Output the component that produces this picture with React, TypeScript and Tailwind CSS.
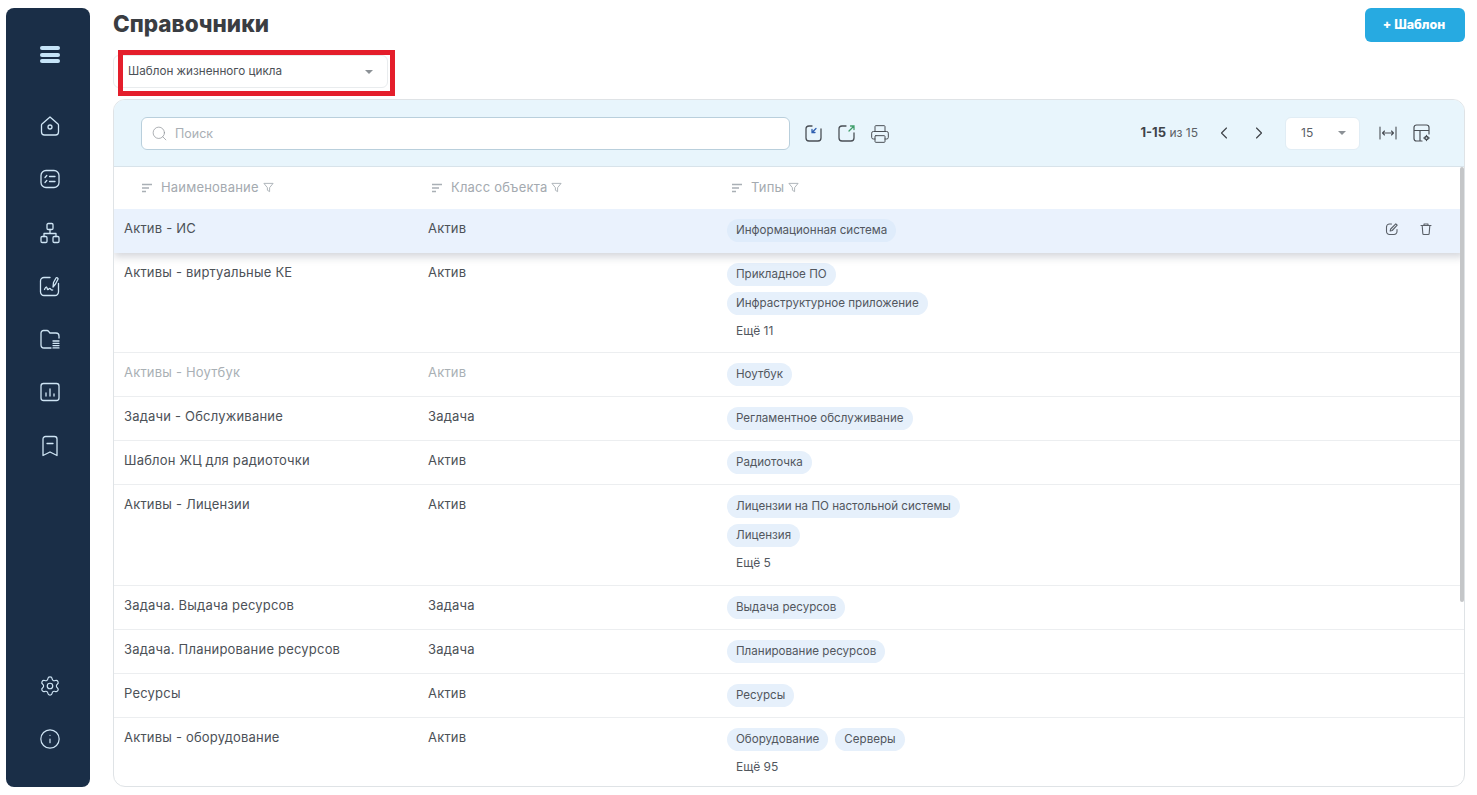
import { Settings, Info, Search, ChevronLeft, ChevronRight, Printer } from "lucide-react";

interface Row {
  name: string;
  cls: string;
  chips: string[][];
  more?: string;
  height: string;
  muted?: boolean;
  active?: boolean;
}

const rows: Row[] = [
  { name: "Актив - ИС", cls: "Актив", chips: [["Информационная система"]], height: "h-[44px]", active: true },
  {
    name: "Активы - виртуальные КЕ",
    cls: "Актив",
    chips: [["Прикладное ПО"], ["Инфраструктурное приложение"]],
    more: "Ещё 11",
    height: "h-[100px]",
  },
  { name: "Активы - Ноутбук", cls: "Актив", chips: [["Ноутбук"]], height: "h-[44px]", muted: true },
  { name: "Задачи - Обслуживание", cls: "Задача", chips: [["Регламентное обслуживание"]], height: "h-[44px]" },
  { name: "Шаблон ЖЦ для радиоточки", cls: "Актив", chips: [["Радиоточка"]], height: "h-[44px]" },
  {
    name: "Активы - Лицензии",
    cls: "Актив",
    chips: [["Лицензии на ПО настольной системы"], ["Лицензия"]],
    more: "Ещё 5",
    height: "h-[101px]",
  },
  { name: "Задача. Выдача ресурсов", cls: "Задача", chips: [["Выдача ресурсов"]], height: "h-[44px]" },
  { name: "Задача. Планирование ресурсов", cls: "Задача", chips: [["Планирование ресурсов"]], height: "h-[44px]" },
  { name: "Ресурсы", cls: "Актив", chips: [["Ресурсы"]], height: "h-[44px]" },
  { name: "Активы - оборудование", cls: "Актив", chips: [["Оборудование", "Серверы"]], more: "Ещё 95", height: "h-[72px]" },
];

// sidebar icons, drawn on a 24 grid
function NavIcon({ children }: { children: React.ReactNode }) {
  return (
    <svg width="24" height="24" viewBox="0 0 24 24" fill="none" stroke="#cfe5f5" strokeWidth="1.3" strokeLinecap="round" strokeLinejoin="round">
      {children}
    </svg>
  );
}

function SortIcon() {
  return (
    <svg width="12" height="12" viewBox="0 0 12 12" fill="none" stroke="#a9afb5" strokeWidth="1.4">
      <path d="M1 2.5h10M1 6h7M1 9.5h4" />
    </svg>
  );
}

function FilterIcon() {
  return (
    <svg width="11" height="11" viewBox="0 0 12 12" fill="none" stroke="#a9afb5" strokeWidth="1" strokeLinejoin="round" className="-translate-y-[1px]">
      <path d="M1 1.5h10L7.2 6.2v4.3L4.8 9V6.2z" />
    </svg>
  );
}

function Chip({ text, active }: { text: string; active?: boolean }) {
  return (
    <span
      className={`inline-flex h-[23px] items-center rounded-full px-[9px] text-[11.6px] whitespace-nowrap text-[#52575e] ${
        active ? "bg-[#dfecfb]" : "bg-[#e6f0fb]"
      }`}
    >
      {text}
    </span>
  );
}

function HeaderCell({ title, width, pad }: { title: string; width: string; pad: string }) {
  return (
    <div className={`flex items-center ${width} ${pad}`}>
      <SortIcon />
      <span className="ml-[8px] mr-[4px] text-[13px] tracking-[0.2px] text-[#a4aab0]">{title}</span>
      <FilterIcon />
    </div>
  );
}

function TableRow({ row }: { row: Row }) {
  const textColor = row.muted ? "text-[#a9b0b5]" : "text-[#4c5157]";
  return (
    <div
      className={`relative flex shrink-0 ${row.height} ${
        row.active ? "z-10 bg-[#eaf2fd] shadow-[0_4px_8px_rgba(60,70,90,0.22)]" : "border-b border-[#eceef0]"
      }`}
    >
      <div className={`w-[314px] pl-[10px] pt-[11px] text-[13px] leading-[17px] tracking-[0.2px] ${textColor}`}>{row.name}</div>
      <div className={`w-[299px] pt-[11px] text-[13px] leading-[17px] tracking-[0.2px] ${textColor}`}>{row.cls}</div>
      <div className="flex flex-col gap-[6px] pt-[10px]">
        {row.chips.map((line) => (
          <div key={line[0]} className="flex gap-[7px]">
            {line.map((c) => (
              <Chip key={c} text={c} active={row.active} />
            ))}
          </div>
        ))}
        {row.more && <div className="mt-[1.5px] pl-[9px] text-[12px] leading-[16px] text-[#52575e]">{row.more}</div>}
      </div>
      {row.active && (
        <div className="absolute right-[31px] top-[13px] flex items-center gap-[20px]">
          <svg width="14" height="14" viewBox="0 0 14 14" fill="none" stroke="#5a6068" strokeWidth="1.1" strokeLinecap="round" strokeLinejoin="round">
            <path d="M6.5 2H4.5a3 3 0 0 0-3 3v4.500a3 3 0 0 0 3 3h4.500a3 3 0 0 0 3-3V7.500" />
            <path d="M10.800 1.800l1.400 1.400-5 5.300-2 .5.500-2z" />
          </svg>
          <svg width="14" height="14" viewBox="0 0 14 14" fill="none" stroke="#5a6068" strokeWidth="1.1" strokeLinecap="round" strokeLinejoin="round">
            <path d="M2 3.500h10M5 3.500V2h4v1.500M3.200 3.500l.6 8a1 1 0 0 0 1 1h4.400a1 1 0 0 0 1-1l.6-8" />
          </svg>
        </div>
      )}
    </div>
  );
}

export default function App() {
  return (
    <div className="flex h-[795px] w-[1477px] overflow-hidden bg-white pl-[6px] font-['Inter',sans-serif]">
      {/* Sidebar */}
      <aside className="mt-[8px] flex h-[779px] w-[84px] shrink-0 flex-col items-center rounded-[8px] bg-[#1a2e47] pb-[36px] pl-[4px] pt-[38px]">
        <div className="flex h-[17px] w-[20px] flex-col justify-between">
          <span className="h-[4px] rounded-full bg-[#c6e4f8]" />
          <span className="h-[4px] rounded-full bg-[#c6e4f8]" />
          <span className="h-[4px] rounded-full bg-[#c6e4f8]" />
        </div>
        <nav className="mt-[51px] flex flex-col items-center gap-[29.3px]">
          <NavIcon>
            <path d="M4 10 12 3l8 7a1.500 1.500 0 0 1 .5 1.100V18a3 3 0 0 1-3 3h-11a3 3 0 0 1-3-3v-6.900A1.500 1.500 0 0 1 4 10z" />
            <circle cx="12" cy="13" r="2" />
          </NavIcon>
          <NavIcon>
            <rect x="3" y="3.500" width="18" height="17" rx="5" />
            <path d="M11.500 9.500h5.500M11.500 14.500h5.500M7 10.500l1.800-2M7 15.500l1.800-2" />
          </NavIcon>
          <NavIcon>
            <rect x="9" y="2.500" width="6" height="6" rx="1.200" />
            <rect x="3" y="15.500" width="6" height="6" rx="1.200" />
            <rect x="15" y="15.500" width="6" height="6" rx="1.200" />
            <path d="M12 8.500v4M6 15.500v-3h12v3" />
          </NavIcon>
          <NavIcon>
            <path d="M12 3.500H6a3.500 3.500 0 0 0-3.500 3.500v11a3.500 3.500 0 0 0 3.500 3.500h11a3.500 3.500 0 0 0 3.500-3.500V9.500" />
            <path d="M6.500 15.500c.8-2 1.600-3 2.200-2.200s.6 2.700 1.400 2.200 1.300-1.500 2-1 1 2 2.600 1.500" />
            <path d="M15 13l.5-4.500L18 4c.5-.8 2.500.2 2 1.200L17.500 10z" />
          </NavIcon>
          <NavIcon>
            <path d="M13 21H6a3 3 0 0 1-3-3V6a2.500 2.500 0 0 1 2.500-2.500H9a2 2 0 0 1 1.600.8l1.300 1.700H18a3 3 0 0 1 3 3v2" />
            <path d="M15 14h6M15 16.300h6M15 18.600h6M15 20.900h6" />
          </NavIcon>
          <NavIcon>
            <rect x="3" y="3.500" width="18" height="17" rx="2.500" />
            <path d="M8 16v-3M12 16V9M16 16v-2" />
          </NavIcon>
          <NavIcon>
            <path d="M5 5a2.500 2.500 0 0 1 2.500-2.500h9A2.500 2.500 0 0 1 19 5v16.500l-7-3.500-7 3.500z" />
            <path d="M9 9.500h6" />
          </NavIcon>
        </nav>
        <div className="mt-auto flex flex-col items-center gap-[31px] text-[#cfe5f5]">
          <Settings size={22} strokeWidth={1.3} className="-translate-y-[1px]" />
          <Info size={22} strokeWidth={1.3} className="-translate-y-[1px]" />
        </div>
      </aside>

      {/* Main */}
      <main className="ml-[23px] flex min-w-0 flex-1 flex-col pr-[12px]">
        <div className="flex h-[50px] shrink-0 items-start justify-between pt-[8px]">
          <h1 className="-mt-[1px] text-[22.5px] font-extrabold leading-[34px] text-[#3a3d42]">Справочники</h1>
          <button className="h-[34px] w-[100px] rounded-[6px] bg-[#27aae1] pr-[2px] text-[12.5px] font-extrabold text-white">+ Шаблон</button>
        </div>

        <div className="relative h-[49px] shrink-0 pt-[5px]">
          <div className="flex h-[33px] w-[275px] items-center justify-between rounded-[6px] border border-[#e9ecee] pl-[14px] pr-[14px] text-[11.7px] text-[#4c5157]">
            <span>Шаблон жизненного цикла</span>
            <span className="h-0 w-0 border-x-[4px] border-t-[4px] border-x-transparent border-t-[#8c9196]" />
          </div>
          {/* red annotation frame */}
          <div className="absolute left-[5px] top-0 h-[46px] w-[277px] border-[5px] border-[#e41e2b]" />
        </div>

        <section className="relative mb-[8px] flex min-h-0 flex-1 flex-col overflow-hidden rounded-[12px] border border-[#dfe3e6]">
          {/* Toolbar */}
          <div className="flex h-[67px] shrink-0 items-center border-b border-[#d8e3ea] bg-[#e8f5fc] pl-[27px] pr-[32px]">
            <div className="flex h-[33px] w-[649px] items-center rounded-[6px] border border-[#b9cfdc] bg-white pl-[9px] text-[12.5px] text-[#a9afb5]">
              <Search size={17} strokeWidth={1} className="mr-[7px] text-[#8c9196]" />
              <span className="translate-y-[1px]">Поиск</span>
            </div>
            <div className="ml-[15px] flex items-center gap-[16px] pt-[1px]">
              <svg width="17" height="17" viewBox="0 0 17 17" fill="none" stroke="#4a4f55" strokeWidth="1.300" strokeLinecap="round">
                <path d="M7 1H4a3 3 0 0 0-3 3v9a3 3 0 0 0 3 3h9a3 3 0 0 0 3-3V4" />
                <path d="M11 3.500 7 7.500M7 4.500v3h3" stroke="#2f5fb0" />
              </svg>
              <svg width="17" height="17" viewBox="0 0 17 17" fill="none" stroke="#4a4f55" strokeWidth="1.300" strokeLinecap="round">
                <path d="M8 1H4a3 3 0 0 0-3 3v9a3 3 0 0 0 3 3h9a3 3 0 0 0 3-3V8" />
                <path d="M11 6l5-5M12.500 1H16v3.500" stroke="#3f9e6b" />
              </svg>
              <Printer size={20} strokeWidth={1.2} className="-ml-[1px] text-[#4a4f55]" />
            </div>
            <div className="ml-auto flex items-center text-[12px] text-[#5b6066]">
              <span>
                <b className="text-[13px] font-bold text-[#3f4349]">1-15</b> из 15
              </span>
              <ChevronLeft size={20} strokeWidth={1.4} className="ml-[16px] text-[#3f4349]" />
              <ChevronRight size={20} strokeWidth={1.4} className="ml-[15px] text-[#3f4349]" />
              <div className="ml-[16px] flex h-[33px] w-[75px] items-center justify-between rounded-[6px] border border-[#e1edf5] bg-white pl-[15px] pr-[13px] text-[12px]">
                15
                <span className="h-0 w-0 border-x-[4px] border-t-[4px] border-x-transparent border-t-[#8c9196]" />
              </div>
              <svg className="ml-[18px]" width="20" height="14" viewBox="0 0 20 14" fill="none" stroke="#4a4f55" strokeWidth="1.100" strokeLinecap="round" strokeLinejoin="round">
                <path d="M2 1v12M18 1v12M4.500 7h11M6.500 5l-2 2 2 2M13.500 5l2 2-2 2" />
              </svg>
              <svg className="ml-[14px]" width="20" height="20" viewBox="0 0 20 20" fill="none" stroke="#4a4f55" strokeWidth="1.200" strokeLinecap="round">
                <path d="M10 18H4.500A2.500 2.500 0 0 1 2 15.500v-11A2.500 2.500 0 0 1 4.500 2h10A2.500 2.500 0 0 1 17 4.500V11M2 7.500h15M8 7.500V18" />
                <circle cx="14.500" cy="15" r="1.600" strokeWidth="1.500" />
                <path d="M14.500 12.400v.7M14.500 16.900v.7M11.900 15h.7M16.400 15h.7" strokeWidth="1.300" />
              </svg>
            </div>
          </div>

          {/* Column headers */}
          <div className="flex h-[42px] shrink-0 items-center">
            <HeaderCell title="Наименование" width="w-[317px]" pad="pl-[27px]" />
            <HeaderCell title="Класс объекта" width="w-[300px]" pad="" />
            <HeaderCell title="Типы" width="" pad="" />
          </div>

          <div className="flex min-h-0 flex-1 flex-col overflow-hidden">
            {rows.map((row) => (
              <TableRow key={row.name} row={row} />
            ))}
          </div>

          {/* scrollbar thumb */}
          <div className="absolute right-0 top-[67px] z-20 h-[435px] w-[4px] rounded-full bg-[#c4c6c8]" />
        </section>
      </main>
    </div>
  );
}
